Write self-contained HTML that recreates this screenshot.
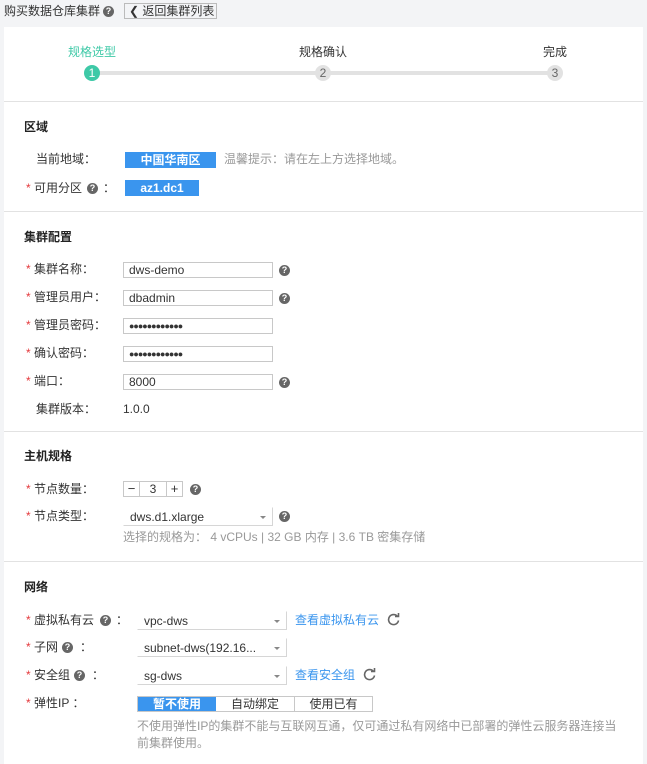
<!DOCTYPE html>
<html><head><meta charset="utf-8"><style>
*{margin:0;padding:0;box-sizing:border-box}
body{width:647px;height:764px;background:#f3f4f6;font-family:"Liberation Sans","Noto Sans CJK SC",sans-serif;font-size:12px;color:#333;position:relative;overflow:hidden}
.a{position:absolute;white-space:nowrap;line-height:16px}
.panel{position:absolute;left:4px;top:27px;width:639px;height:737px;background:#fff}
.hr{position:absolute;left:4px;width:639px;height:1px;background:#e2e2e2}
.h{font-weight:bold;font-size:12px;color:#222}
.st{color:#e4393c}
.q{position:absolute;width:11px;height:11px;border-radius:50%;background:#666;color:#fff;font-size:9px;font-weight:bold;line-height:11px;text-align:center}
.in{position:absolute;border:1px solid #c8c8c8;background:#fff;height:16px;padding-left:5px;line-height:14px;font-size:12px}
.blue{position:absolute;background:#3a95ee;color:#fff;font-weight:bold;text-align:center;line-height:16px;height:16px}
.sel{position:absolute;border:1px solid #d6d6d6;border-left-color:#fff;border-top-color:#fff;height:19px;line-height:18px;padding-left:6px}
.sel:after{content:"";position:absolute;right:6px;top:8px;border:3px solid transparent;border-top:3px solid #888}
.gray{color:#999}
.link{color:#3a95ee}
.dot{position:absolute;width:16px;height:16px;border-radius:50%;background:#e2e2e2;color:#666;font-size:12px;text-align:center;line-height:16px}
</style></head><body>
<div class="a" style="left:4px;top:3px;color:#333">购买数据仓库集群</div>
<div class="q" style="left:103px;top:6px">?</div>
<div class="a" style="left:124px;top:3px;width:93px;height:16px;border:1px solid #bbb;background:#f3f4f6;line-height:14px;padding-left:4px">❮ 返回集群列表</div>
<div class="panel"></div>
<div class="a" style="left:68px;top:44px;color:#3ec9a7">规格选型</div>
<div class="a" style="left:299px;top:44px">规格确认</div>
<div class="a" style="left:543px;top:44px">完成</div>
<div style="position:absolute;left:92px;top:71px;width:463px;height:4px;background:#e2e2e2"></div>
<div class="dot" style="left:84px;top:65px;background:#3ec9a7;color:#fff">1</div>
<div class="dot" style="left:315px;top:65px">2</div>
<div class="dot" style="left:547px;top:65px">3</div>
<div class="hr" style="top:101px"></div>
<div class="a h" style="left:24px;top:119px">区域</div>
<div class="a" style="left:36px;top:151px">当前地域：</div>
<div class="blue" style="left:125px;top:152px;width:91px">中国华南区</div>
<div class="a gray" style="left:224px;top:151px">温馨提示：请在左上方选择地域。</div>
<div class="a" style="left:26px;top:180px"><span class="st">*</span> 可用分区</div>
<div class="q" style="left:87px;top:183px">?</div>
<div class="a" style="left:103px;top:180px">：</div>
<div class="blue" style="left:125px;top:180px;width:74px">az1.dc1</div>
<div class="hr" style="top:211px"></div>
<div class="a h" style="left:24px;top:229px">集群配置</div>
<div class="a" style="left:26px;top:261px"><span class="st">*</span> 集群名称：</div>
<div class="in" style="left:123px;top:262px;width:150px">dws-demo</div><div class="q" style="left:279px;top:265px">?</div>
<div class="a" style="left:26px;top:289px"><span class="st">*</span> 管理员用户：</div>
<div class="in" style="left:123px;top:290px;width:150px">dbadmin</div><div class="q" style="left:279px;top:293px">?</div>
<div class="a" style="left:26px;top:317px"><span class="st">*</span> 管理员密码：</div>
<div class="in" style="left:123px;top:318px;width:150px;font-size:9px;letter-spacing:-1px">●●●●●●●●●●●●</div>
<div class="a" style="left:26px;top:345px"><span class="st">*</span> 确认密码：</div>
<div class="in" style="left:123px;top:346px;width:150px;font-size:9px;letter-spacing:-1px">●●●●●●●●●●●●</div>
<div class="a" style="left:26px;top:373px"><span class="st">*</span> 端口：</div>
<div class="in" style="left:123px;top:374px;width:150px">8000</div><div class="q" style="left:279px;top:377px">?</div>
<div class="a" style="left:36px;top:401px">集群版本：</div>
<div class="a" style="left:123px;top:401px">1.0.0</div>
<div class="hr" style="top:431px"></div>
<div class="a h" style="left:24px;top:448px">主机规格</div>
<div class="a" style="left:26px;top:481px"><span class="st">*</span> 节点数量：</div>
<div style="position:absolute;left:123px;top:481px;width:60px;height:16px;border:1px solid #c8c8c8;display:flex;line-height:14px;text-align:center;font-size:13px">
<div style="width:16px;border-right:1px solid #c8c8c8">−</div><div style="flex:1;font-size:12px">3</div><div style="width:16px;border-left:1px solid #c8c8c8">+</div></div>
<div class="q" style="left:190px;top:484px">?</div>
<div class="a" style="left:26px;top:508px"><span class="st">*</span> 节点类型：</div>
<div class="sel" style="left:123px;top:507px;width:150px">dws.d1.xlarge</div><div class="q" style="left:279px;top:511px">?</div>
<div class="a gray" style="left:123px;top:529px">选择的规格为： 4 vCPUs | 32 GB 内存 | 3.6 TB 密集存储</div>
<div class="hr" style="top:561px"></div>
<div class="a h" style="left:24px;top:579px">网络</div>
<div class="a" style="left:26px;top:612px"><span class="st">*</span> 虚拟私有云</div>
<div class="q" style="left:100px;top:615px">?</div><div class="a" style="left:116px;top:612px">：</div>
<div class="sel" style="left:137px;top:611px;width:150px">vpc-dws</div>
<div class="a link" style="left:295px;top:612px">查看虚拟私有云</div>
<svg style="position:absolute;left:387px;top:613px" width="13" height="13" viewBox="0 0 13 13"><path d="M10.5 3.5A5 5 0 1 0 11.5 7.5" fill="none" stroke="#666" stroke-width="1.6"/><path d="M8 3.5h3.5V0" fill="none" stroke="#666" stroke-width="1.6"/></svg>
<div class="a" style="left:26px;top:639px"><span class="st">*</span> 子网</div>
<div class="q" style="left:62px;top:642px">?</div><div class="a" style="left:80px;top:639px">：</div>
<div class="sel" style="left:137px;top:638px;width:150px">subnet-dws(192.16...</div>
<div class="a" style="left:26px;top:667px"><span class="st">*</span> 安全组</div>
<div class="q" style="left:74px;top:670px">?</div><div class="a" style="left:92px;top:667px">：</div>
<div class="sel" style="left:137px;top:666px;width:150px">sg-dws</div>
<div class="a link" style="left:295px;top:667px">查看安全组</div>
<svg style="position:absolute;left:363px;top:668px" width="13" height="13" viewBox="0 0 13 13"><path d="M10.5 3.5A5 5 0 1 0 11.5 7.5" fill="none" stroke="#666" stroke-width="1.6"/><path d="M8 3.5h3.5V0" fill="none" stroke="#666" stroke-width="1.6"/></svg>
<div class="a" style="left:26px;top:695px"><span class="st">*</span> 弹性IP ：</div>
<div style="position:absolute;left:137px;top:696px;width:236px;height:16px;border:1px solid #c8c8c8;display:flex;line-height:14px;text-align:center">
<div style="width:78px;background:#3a95ee;color:#fff;font-weight:bold">暂不使用</div><div style="width:79px;border-right:1px solid #c8c8c8">自动绑定</div><div style="flex:1">使用已有</div></div>
<div class="a gray" style="left:137px;top:718px">不使用弹性IP的集群不能与互联网互通，仅可通过私有网络中已部署的弹性云服务器连接当</div>
<div class="a gray" style="left:137px;top:735px">前集群使用。</div>
</body></html>
